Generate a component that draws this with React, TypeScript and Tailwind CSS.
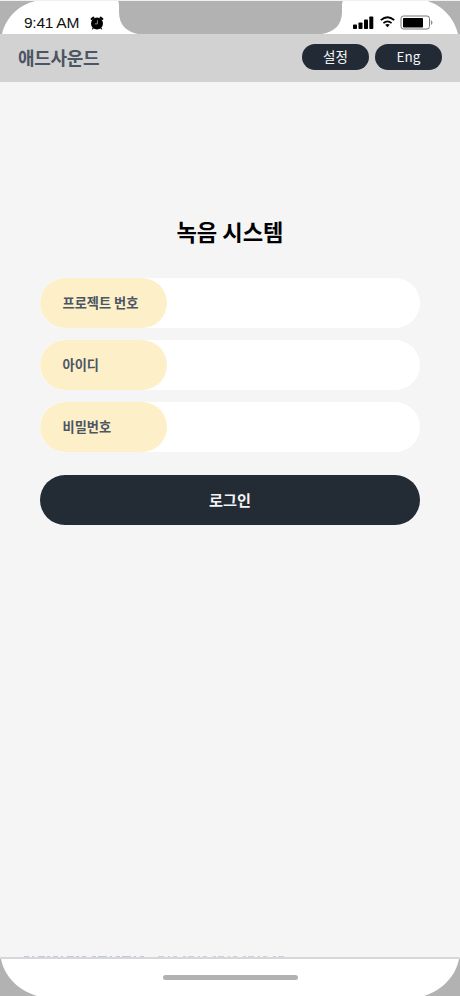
import { useState } from "react";

const fields = [
  { name: "project", label: "프로젝트 번호", type: "text" },
  { name: "userId", label: "아이디", type: "text" },
  { name: "password", label: "비밀번호", type: "password" },
];

function StatusBar() {
  return (
    <div className="relative h-[34px] shrink-0 bg-[#b2b2b2]">
      {/* screen corners and notch */}
      <svg className="absolute inset-0" width="460" height="34" viewBox="0 0 460 34">
        <path
          d="M2 34C6 17 20 3 40 0H117Q119 1 119 5V12C119 25 127 32 138 34H2Z"
          fill="#fff"
        />
        <path
          d="M322 34C334 32 342 25 342 12V5Q342 1 344 0H424C441 4 454 17 458 34Z"
          fill="#fff"
        />
        <path d="M0 0.5H460" stroke="#f0f0f0" />
      </svg>
      <div className="relative flex h-full items-center pt-[10px] pl-6 pr-[27px]">
        <span className="pt-0.5 font-['Liberation_Sans'] text-[15.5px] leading-none text-[#111] tracking-[-0.25px]">
          9:41 AM
        </span>
        <svg className="ml-[11px] mt-0.5" width="14" height="14" viewBox="0 0 14 14">
          <path d="M1.6 3L3.4 1.6M12.4 3L10.6 1.6" stroke="#000" strokeWidth="2" strokeLinecap="round" />
          <path d="M3.2 12L2.6 12.8M10.8 12l0.6 0.8" stroke="#000" strokeWidth="1.2" strokeLinecap="round" />
          <circle cx="7" cy="7.4" r="6" />
          <path d="M7.4 4.3v3.6H4.8" stroke="#aaa" strokeWidth="0.8" fill="none" />
        </svg>
        <div className="ml-auto flex items-center">
          <svg width="21" height="13" viewBox="0 0 21 13">
            <rect x="0" y="8.5" width="4" height="4.5" rx="0.8" />
            <rect x="5.5" y="6.5" width="4" height="6.5" rx="0.8" />
            <rect x="11" y="3.5" width="4" height="9.5" rx="0.8" />
            <rect x="16.3" y="0.5" width="4" height="12.5" rx="0.8" />
          </svg>
          <svg className="ml-1.5" width="15" height="12" viewBox="0 0 15 12" fill="none" stroke="#000">
            <path d="M0.8 4.2Q7.5 -1.8 14.2 4.2" strokeWidth="1.8" />
            <path d="M3.4 7.2Q7.5 3.4 11.6 7.2" strokeWidth="1.7" />
            <path d="M5.2 8.8Q7.5 7 9.8 8.8L7.5 11.2Z" fill="#000" stroke="none" />
          </svg>
          <svg className="ml-[5px]" width="33" height="15" viewBox="0 0 33 15">
            <rect x="1" y="1" width="28.5" height="13" rx="2.5" fill="#fff" stroke="#777" />
            <rect x="3" y="3" width="20" height="9.5" rx="0.8" />
            <path d="M31.3 5.5Q33 7.5 31.3 9.5Z" fill="#777" stroke="#777" strokeWidth="0.5" />
          </svg>
        </div>
      </div>
    </div>
  );
}

function Header() {
  return (
    <header className="flex h-12 shrink-0 items-center bg-[#d2d2d2] pl-[18px] pr-[18px] pb-[3px]">
      <h1 className="text-[18px] font-bold leading-none tracking-[-0.3px] text-[#4b5563]">애드사운드</h1>
      <div className="ml-auto flex gap-1.5">
        <button className="h-[26px] w-[67px] rounded-full bg-[#212a35] text-[13.5px] leading-none text-[#f3f4f6]">
          설정
        </button>
        <button className="h-[26px] w-[67px] rounded-full bg-[#212a35] text-[13.5px] leading-none text-[#f3f4f6]">
          Eng
        </button>
      </div>
    </header>
  );
}

export default function App() {
  const [form, setForm] = useState({ project: "", userId: "", password: "" });

  const handleChange = (e: React.ChangeEvent<HTMLInputElement>) => {
    const { name, value } = e.target;
    setForm({ ...form, [name]: value });
  };

  return (
    <div className="flex h-[996px] w-[460px] flex-col overflow-hidden bg-[#f5f5f5] font-['Noto_Sans_CJK_KR','Noto_Sans_CJK_SC',sans-serif]">
      <StatusBar />
      <Header />

      <main className="flex-1 px-10 pt-[133px]">
        <h2 className="text-center text-[22.2px] font-bold leading-[32px] text-black">녹음 시스템</h2>

        <form className="mt-[31px]" onSubmit={(e) => e.preventDefault()}>
          <div className="space-y-3">
            {fields.map((field) => (
              <label key={field.name} className="flex h-[50px] overflow-hidden rounded-full bg-white">
                <span className="flex w-[127px] shrink-0 items-center rounded-full bg-[#fdefc8] pl-[22.5px] text-[13.2px] font-bold text-[#4b5563]">
                  {field.label}
                </span>
                <input
                  type={field.type}
                  name={field.name}
                  value={form[field.name as keyof typeof form]}
                  onChange={handleChange}
                  className="min-w-0 flex-1 px-4 text-sm text-gray-800 outline-none"
                />
              </label>
            ))}
          </div>

          <button
            type="submit"
            className="mt-[23px] h-[50px] w-full rounded-full bg-[#232b35] pb-px text-[15.2px] font-bold text-[#f3f4f6]"
          >
            로그인
          </button>
        </form>
      </main>

      {/* top edge of the content hidden below the fold */}
      <svg className="ml-6 shrink-0" width="264" height="2" viewBox="0 0 264 2" fill="none">
        <path d="M0 1.5H62" stroke="#c3c9df" strokeDasharray="5 3 2 4 7 2 3 3" />
        <path d="M68 1.5H122" stroke="#c3c9df" strokeDasharray="4 2 9 3 2 4" />
        <path d="M134 1.5H264" stroke="#d0d1d6" strokeDasharray="6 4 2 3 4 6 3 2" />
      </svg>

      {/* home indicator */}
      <footer className="relative h-[39px] shrink-0 border-t-2 border-[#d6d7da] bg-[#b2b2b2]">
        <svg className="absolute inset-0" width="460" height="37" viewBox="0 0 460 37">
          <path d="M1 0H459C456 16 443 31 424 37H37C17 31 4 16 1 0Z" fill="#fff" />
        </svg>
        <div className="relative mx-auto mt-4 h-[5px] w-[135px] rounded-full bg-[#b2b2b2]" />
      </footer>
    </div>
  );
}
